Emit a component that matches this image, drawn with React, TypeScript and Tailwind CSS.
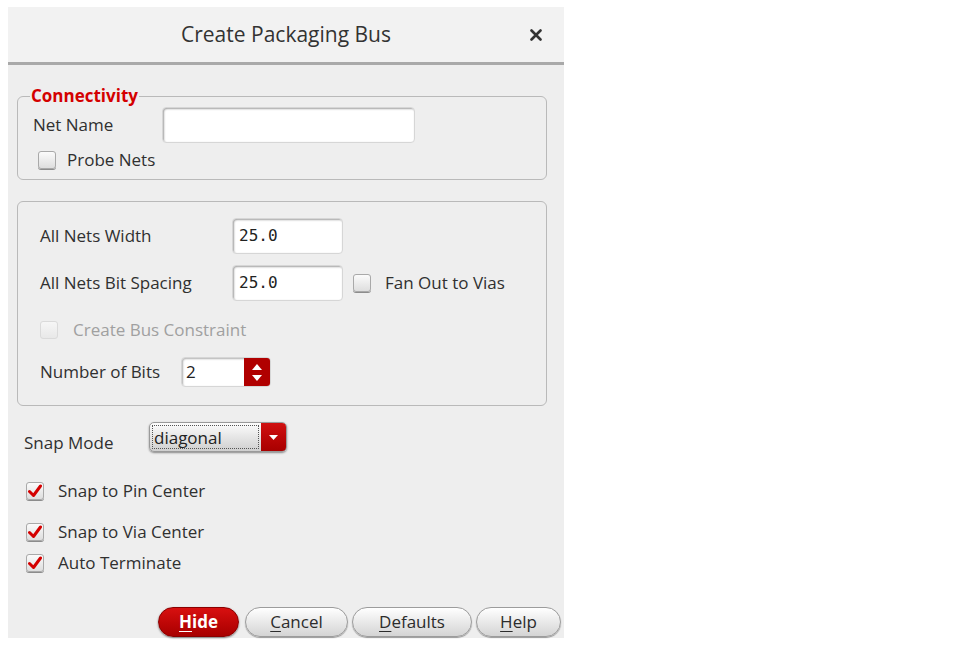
import React from "react";

const font = { fontFamily: '"Open Sans", "Noto Sans", sans-serif' };

function CheckBox({ checked = false, disabled = false }: { checked?: boolean; disabled?: boolean }) {
  return (
    <span
      className={`flex h-[18px] w-[18px] shrink-0 items-center justify-center rounded-[3px] border ${
        disabled
          ? "border-[#dadada] bg-gradient-to-b from-[#f6f6f6] to-[#e8e8e8]"
          : "border-[#a9a9a9] bg-gradient-to-b from-[#fbfbfb] to-[#dedede] shadow-[0_1px_0_#8c8c8c]"
      }`}
    >
      {checked && (
        <svg width="14" height="14" viewBox="0 0 14 14">
          <path d="M1.5 7.5 L5.5 11.5 L12.5 2" stroke="#d40000" strokeWidth="3" fill="none" strokeLinecap="round" strokeLinejoin="round" />
        </svg>
      )}
    </span>
  );
}

function TextBox({ value = "", w }: { value?: string; w: string }) {
  return (
    <div
      className={`${w} flex h-[36px] items-center rounded-[4px] border border-[#d6d6d6] bg-white pl-[6px] text-[16px] text-[#222] shadow-[inset_1px_1px_2px_#a0a0a0]`}
      style={{ fontFamily: '"DejaVu Sans Mono", "Liberation Mono", monospace' }}
    >
      {value}
    </div>
  );
}

function Btn({ label, primary = false, w }: { label: string; primary?: boolean; w: string }) {
  return (
    <button
      className={`${w} flex h-[30px] items-center justify-center rounded-full border text-[17px] leading-[20px] ${
        primary
          ? "border-[#8a0000] bg-gradient-to-b from-[#d81010] to-[#a80000] font-bold text-white shadow-[0_1px_2px_#777]"
          : "border-[#9c9c9c] bg-gradient-to-b from-[#ffffff] to-[#d4d4d4] text-[#2c2c2c] shadow-[0_1px_1px_#999]"
      }`}
    >
      <span className="underline decoration-1 underline-offset-[3px]">{label[0]}</span>
      {label.slice(1)}
    </button>
  );
}

export default function App() {
  return (
    <div className="h-[647px] w-[960px] bg-white pl-[8px] pt-[7px] text-[#303030]" style={font}>
      <div className="relative flex h-[631px] w-[556px] flex-col bg-[#eeeeee]">
        {/* window corners */}
        <span className="absolute left-0 top-0 h-0 w-0 border-l-[5px] border-t-[5px] border-l-[#111] border-t-[#111] border-r-[5px] border-r-transparent border-b-[5px] border-b-transparent" />
        <span className="absolute right-0 top-0 h-0 w-0 border-r-[5px] border-t-[5px] border-r-[#111] border-t-[#111] border-l-[5px] border-l-transparent border-b-[5px] border-b-transparent" />

        {/* Title bar */}
        <header className="relative flex h-[58px] shrink-0 items-center justify-center border-b-[3px] border-[#a9a9a9] bg-[#f2f2f2]">
          <h1 className="text-[21px] font-medium text-[#333]">Create Packaging Bus</h1>
          <svg className="absolute right-[22px] top-[22px]" width="12" height="12" viewBox="0 0 12 12">
            <path d="M1.5 1.5 L10.5 10.5 M10.5 1.5 L1.5 10.5" stroke="#333" strokeWidth="2.6" strokeLinecap="round" />
          </svg>
        </header>

        <div className="flex flex-1 flex-col pl-[9px] pr-[17px] text-[17px] leading-[20px]">
          {/* Connectivity */}
          <fieldset className="mt-[21px] h-[94px] rounded-[6px] border border-[#b9b9b9] pl-[12px]">
            <legend className="px-[1px] text-[17px] font-bold leading-[20px] text-[#d40000]">Connectivity</legend>
            <div className="ml-[3px] mt-[1px] flex items-center">
              <span className="w-[129px]">Net Name</span>
              <TextBox w="w-[253px]" />
            </div>
            <div className="ml-[8px] mt-[8px] flex h-[18px] items-center gap-[11px]">
              <CheckBox />
              <span>Probe Nets</span>
            </div>
          </fieldset>

          {/* Widths */}
          <div className="mt-[21px] flex h-[205px] flex-col rounded-[6px] border border-[#b9b9b9] pl-[22px] pt-[16px]">
            <div className="flex items-center">
              <span className="w-[192px]">All Nets Width</span>
              <TextBox value="25.0" w="w-[111px]" />
            </div>
            <div className="mt-[11px] flex items-center">
              <span className="w-[192px]">All Nets Bit Spacing</span>
              <TextBox value="25.0" w="w-[111px]" />
              <span className="ml-[10px]">
                <CheckBox />
              </span>
              <span className="ml-[14px]">Fan Out to Vias</span>
            </div>
            <div className="mt-[20px] flex h-[18px] items-center gap-[15px]">
              <CheckBox disabled />
              <span className="text-[#a0a0a0]">Create Bus Constraint</span>
            </div>
            <div className="mt-[18px] flex items-center">
              <span className="w-[141px]">Number of Bits</span>
              <div className="flex h-[30px] w-[90px] overflow-hidden rounded-[4px] border border-[#d6d6d6] bg-white shadow-[inset_1px_1px_2px_#b0b0b0]">
                <span className="flex flex-1 items-center pl-[4px] text-[17px] text-[#222]">2</span>
                <span className="flex w-[26px] flex-col items-center justify-center gap-[5px] bg-[#b00000]">
                  <svg width="10" height="6" viewBox="0 0 10 6"><path d="M0 6 L5 0 L10 6 Z" fill="#fff" /></svg>
                  <svg width="10" height="6" viewBox="0 0 10 6"><path d="M0 0 L5 6 L10 0 Z" fill="#fff" /></svg>
                </span>
              </div>
            </div>
          </div>

          {/* Snap mode */}
          <div className="mt-[15px] flex items-center">
            <span className="mt-[12px] w-[132px] pl-[7px]">Snap Mode</span>
            <div className="flex h-[30px] w-[138px] overflow-hidden rounded-[5px] border border-[#9a9a9a] bg-gradient-to-b from-[#fdfdfd] to-[#cfcfcf] shadow-[0_1px_2px_#888]">
              <span className="my-[2px] ml-[2px] flex w-[107px] items-center border border-dotted border-[#555] pl-[1px] text-[17px] leading-none text-[#222]">
                diagonal
              </span>
              <span className="ml-auto flex w-[25px] items-center justify-center bg-gradient-to-b from-[#d01010] to-[#a80000]">
                <svg width="9" height="5" viewBox="0 0 9 5"><path d="M0 0 L4.5 5 L9 0 Z" fill="#fff" /></svg>
              </span>
            </div>
          </div>

          <div className="ml-[9px] mt-[29px] flex h-[18px] items-center gap-[14px]">
            <CheckBox checked />
            <span>Snap to Pin Center</span>
          </div>
          <div className="ml-[9px] mt-[23px] flex h-[18px] items-center gap-[14px]">
            <CheckBox checked />
            <span>Snap to Via Center</span>
          </div>
          <div className="ml-[9px] mt-[13px] flex h-[18px] items-center gap-[14px]">
            <CheckBox checked />
            <span>Auto Terminate</span>
          </div>

          {/* Buttons */}
          <div className="-mr-[14px] mt-auto mb-[1px] flex justify-end gap-[4px]">
            <span className="mr-[2px]">
              <Btn label="Hide" primary w="w-[81px]" />
            </span>
            <Btn label="Cancel" w="w-[103px]" />
            <Btn label="Defaults" w="w-[120px]" />
            <Btn label="Help" w="w-[85px]" />
          </div>
        </div>
      </div>
    </div>
  );
}
